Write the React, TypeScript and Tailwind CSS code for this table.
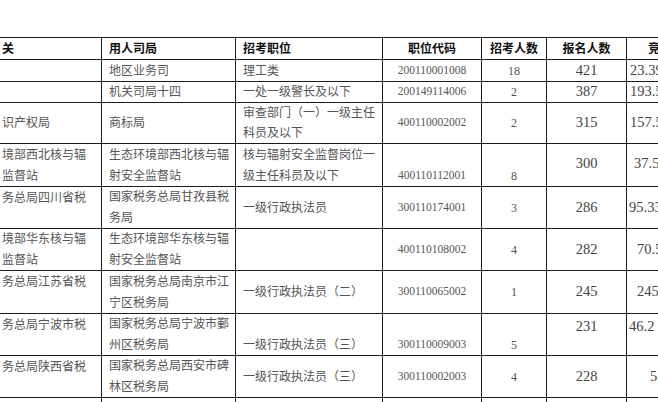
import React from 'react';

type V = 'top' | 'center' | 'bottom';
type Cell = { t?: string[]; v?: V; cls?: string };
type Row = { h: string; cells: Cell[] };

const cols = ['w-[102px]', 'w-[134px]', 'w-[147px]', 'w-[99px]', 'w-[65px]', 'w-[80px]', 'w-[80px]'];

// alignment per column: left for text columns, centered for numbers
const colAlign = ['justify-start pl-[2px]', 'justify-start pl-[7px]', 'justify-start pl-[7px]', 'justify-center', 'justify-center', 'justify-center', 'justify-start'];
const colText = [
  'text-[12px] text-[#555]',
  'text-[12px] text-[#555]',
  'text-[12px] text-[#555]',
  'text-[11.5px] text-[#555]',
  'text-[12px] text-[#555]',
  'text-[14.5px] text-[#444]',
  'text-[14.5px] text-[#444]',
];

const rows: Row[] = [
  {
    h: 'h-[22px]',
    cells: [
      { t: ['关'], cls: 'pl-0' },
      { t: ['用人司局'] },
      { t: ['招考职位'] },
      { t: ['职位代码'] },
      { t: ['招考人数'] },
      { t: ['报名人数'] },
      { t: ['竞争比'], cls: 'pl-[21px]' },
    ],
  },
  {
    h: 'h-[22px]',
    cells: [{}, { t: ['地区业务司'] }, { t: ['理工类'] }, { t: ['200110001008'] }, { t: ['18'] }, { t: ['421'] }, { t: ['23.39'], cls: 'pl-[3px]' }],
  },
  {
    h: 'h-[21px]',
    cells: [{}, { t: ['机关司局十四'] }, { t: ['一处一级警长及以下'] }, { t: ['200149114006'] }, { t: ['2'] }, { t: ['387'] }, { t: ['193.5'], cls: 'pl-[3px]' }],
  },
  {
    h: 'h-[41px]',
    cells: [
      { t: ['识产权局'] },
      { t: ['商标局'] },
      { t: ['审查部门（一）一级主任', '科员及以下'] },
      { t: ['400110002002'] },
      { t: ['2'] },
      { t: ['315'] },
      { t: ['157.5'], cls: 'pl-[3px]' },
    ],
  },
  {
    h: 'h-[43px]',
    cells: [
      { t: ['境部西北核与辐', '监督站'] },
      { t: ['生态环境部西北核与辐', '射安全监督站'] },
      { t: ['核与辐射安全监督岗位一', '级主任科员及以下'] },
      { t: ['400110112001'], v: 'bottom' },
      { t: ['8'], v: 'bottom' },
      { t: ['300'], cls: 'pb-[2px]' },
      { t: ['37.5'], cls: 'pl-[7px] pb-[2px]' },
    ],
  },
  {
    h: 'h-[42px]',
    cells: [
      { t: ['务总局四川省税'], v: 'top' },
      { t: ['国家税务总局甘孜县税', '务局'] },
      { t: ['一级行政执法员'] },
      { t: ['300110174001'] },
      { t: ['3'] },
      { t: ['286'] },
      { t: ['95.33'], cls: 'pl-[2px]' },
    ],
  },
  {
    h: 'h-[42px]',
    cells: [
      { t: ['境部华东核与辐', '监督站'] },
      { t: ['生态环境部华东核与辐', '射安全监督站'] },
      {},
      { t: ['400110108002'] },
      { t: ['4'] },
      { t: ['282'] },
      { t: ['70.5'], cls: 'pl-[10px]' },
    ],
  },
  {
    h: 'h-[43px]',
    cells: [
      { t: ['务总局江苏省税'], v: 'top' },
      { t: ['国家税务总局南京市江', '宁区税务局'] },
      { t: ['一级行政执法员（二）'] },
      { t: ['300110065002'] },
      { t: ['1'] },
      { t: ['245'] },
      { t: ['245'], cls: 'pl-[10px]' },
    ],
  },
  {
    h: 'h-[42px]',
    cells: [
      { t: ['务总局宁波市税'], v: 'top' },
      { t: ['国家税务总局宁波市鄞', '州区税务局'] },
      { t: ['一级行政执法员（三）'], v: 'bottom' },
      { t: ['300110009003'], v: 'bottom' },
      { t: ['5'], v: 'bottom' },
      { t: ['231'], cls: 'pb-[16px]' },
      { t: ['46.2'], cls: 'pl-[2px] pb-[16px]' },
    ],
  },
  {
    h: 'h-[42px]',
    cells: [
      { t: ['务总局陕西省税'], v: 'top' },
      { t: ['国家税务总局西安市碑', '林区税务局'] },
      { t: ['一级行政执法员（三）'] },
      { t: ['300110002003'] },
      { t: ['4'] },
      { t: ['228'] },
      { t: ['57'], cls: 'pl-[23px]' },
    ],
  },
  { h: 'h-[42px]', cells: [{}, {}, {}, {}, {}, {}, {}] },
];

const vAlign: Record<V, string> = {
  top: 'justify-start',
  center: 'justify-center',
  bottom: 'justify-end',
};

export default function App() {
  return (
    <div className="w-[658px] h-[402px] overflow-hidden bg-white pt-[37px] font-['Liberation_Serif','Noto_Sans_CJK_SC',serif]">
      <div className="w-max border-t border-[#1c1c1c]">
        {rows.map((row, ri) => (
          <div key={ri} className={`flex ${row.h}`}>
            {row.cells.map((c, ci) => {
              const head = ri === 0;
              return (
                <div
                  key={ci}
                  className={`${cols[ci]} shrink-0 flex flex-col ${vAlign[c.v ?? 'center']} border-b border-r border-[#1c1c1c] ${ci === 6 ? 'border-r-0' : ''}`}
                >
                  {c.t?.map((line, li) => (
                    <div
                      key={li}
                      className={`flex h-[21px] items-center whitespace-nowrap ${colAlign[ci]} ${
                        head ? 'text-[12px] font-bold text-[#111]' : colText[ci]
                      } ${c.cls ?? ''}`}
                    >
                      {line}
                    </div>
                  ))}
                </div>
              );
            })}
          </div>
        ))}
      </div>
    </div>
  );
}
